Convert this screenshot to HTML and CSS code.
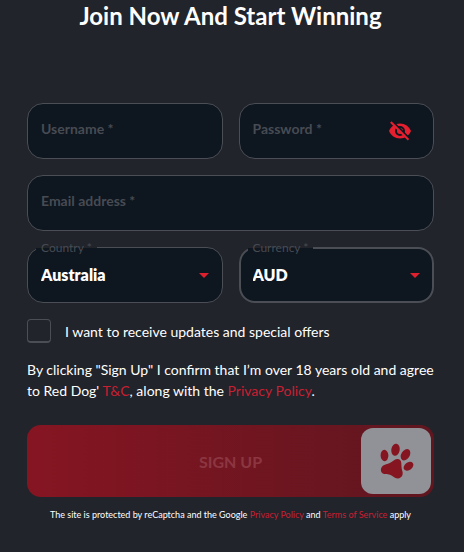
FILE: index.html
```html
<!DOCTYPE html>
<html lang="en">
<head>
  <meta charset="UTF-8" />
  <meta name="viewport" content="width=device-width, initial-scale=1.0"/>
  <title>Sign Up</title>
  <link rel="stylesheet" href="styles.css">
</head>
<body>
  <main class="signup">
    <h1>Join Now And Start Winning</h1>

    <form class="signup-form">
      <div class="field">
        <input type="text" id="username" placeholder=" " required />
        <label for="username">Username *</label>
      </div>

      <div class="field">
        <input type="password" id="password" placeholder=" " required />
        <label for="password">Password *</label>
        <button type="button" class="toggle-password" aria-label="Show password">
          <svg viewBox="0 0 24 24" width="24" height="24">
            <path fill="#e51f30" fill-rule="evenodd" d="M12 4.5C7 4.500 2.700 7.600 1 12c1.700 4.400 6 7.500 11 7.500s9.300-3.100 11-7.500c-1.700-4.400-6-7.500-11-7.500zM12 17a5 5 0 1 1 0-10 5 5 0 0 1 0 10z"/>
            <circle cx="12" cy="12" r="3" fill="#e51f30"/>
            <path d="M4.500 2.500L22 20" stroke="#0e161f" stroke-width="2"/>
            <path d="M2.800 3L20.500 20.700" stroke="#e51f30" stroke-width="2"/>
          </svg>
        </button>
      </div>

      <div class="field wide">
        <input type="email" id="email" placeholder=" " required />
        <label for="email">Email address *</label>
      </div>

      <div class="field select-field">
        <select id="country">
          <option>Australia</option>
          <option>New Zealand</option>
          <option>Canada</option>
        </select>
        <label for="country">Country *</label>
        <span class="arrow"></span>
      </div>

      <div class="field select-field strong">
        <select id="currency">
          <option>AUD</option>
          <option>NZD</option>
          <option>CAD</option>
        </select>
        <label for="currency">Currency *</label>
        <span class="arrow"></span>
      </div>

      <div class="updates wide">
        <input type="checkbox" id="updates" />
        <label for="updates">I want to receive updates and special offers</label>
      </div>

      <p class="terms wide">By clicking "Sign Up" I confirm that I’m over 18 years old and agree to Red Dog' <a href="#">T&amp;C</a>, along with the <a href="#">Privacy Policy</a>.</p>

      <button type="submit" class="submit wide" disabled>
        <span class="submit-text">SIGN UP</span>
        <span class="paw">
          <svg viewBox="0 0 36 38" width="36" height="38">
            <g fill="#861522">
              <ellipse cx="6.500" cy="13.500" rx="3.900" ry="5.700" transform="rotate(-2 6.500 13.500)"/>
              <ellipse cx="17.500" cy="7.800" rx="4.200" ry="6.100" transform="rotate(10 17.500 7.800)"/>
              <ellipse cx="27.500" cy="12.700" rx="4.200" ry="6.200" transform="rotate(32 27.500 12.700)"/>
              <ellipse cx="30.500" cy="24.300" rx="3.800" ry="5.400" transform="rotate(52 30.500 24.300)"/>
              <path d="M20 17c2.300.2 3.200 2 3.300 4.500.2 3 .2 5.200 1 7.500 1.200 3.500-.3 7-4.300 7.500-3.200.3-5-2.600-8-3.700-2.700-1-6.500.2-8.300-2.300-1.800-2.800-.4-6.300 2.600-7.500 2.500-1 5-1.400 7.200-2.900 2.300-1.600 3.700-3.300 6.500-3.100z"/>
            </g>
          </svg>
        </span>
      </button>
    </form>

    <p class="captcha">The site is protected by reCaptcha and the Google <a href="#">Privacy Policy</a> and <a href="#">Terms of Service</a> apply</p>
  </main>
</body>
</html>
```

FILE: styles.css
```css
* {
  margin: 0;
  padding: 0;
  box-sizing: border-box;
}
body {
  font-family: Lato, "Liberation Sans", sans-serif;
  background: #22242b;
  color: #fff;
  min-height: 100vh;
}
.signup {
  padding: 0 30px 24px 27px;
}
h1 {
  font-size: 24px;
  line-height: 32px;
  font-weight: 700;
  text-align: center;
  margin-bottom: 71px;
}
.signup-form {
  display: grid;
  grid-template-columns: 1fr 1fr;
  gap: 16px;
}
.wide {
  grid-column: 1 / -1;
}

/* fields */
.field {
  position: relative;
}
.field input,
.field select {
  display: block;
  width: 100%;
  height: 56px;
  padding: 0 13px 2px;
  font-family: inherit;
  font-size: 16px;
  font-weight: 800;
  color: #fff;
  background: #0e161f;
  border: 1px solid #4b4e55;
  border-radius: 16px;
  outline: none;
  appearance: none;
}
.field label {
  position: absolute;
  left: 14px;
  top: 16px;
  font-size: 14px;
  line-height: 20px;
  font-weight: 700;
  color: #474b53;
  pointer-events: none;
}
.field input:focus + label,
.field input:not(:placeholder-shown) + label,
.select-field label {
  left: 9px;
  top: -7px;
  padding: 0 5px;
  font-size: 12px;
  line-height: 16px;
  font-weight: 400;
  background: linear-gradient(#22242b 50%, #0e161f 50%);
}
.field.strong select {
  border-width: 2px;
  padding: 0 12px 2px;
}
.arrow {
  position: absolute;
  right: 14px;
  top: 26px;
  border: 5px solid transparent;
  border-top-color: #e0202f;
  border-bottom: 0;
  pointer-events: none;
}
.toggle-password {
  position: absolute;
  right: 22px;
  top: 16px;
  width: 24px;
  height: 24px;
  border: none;
  background: none;
  cursor: pointer;
}
.toggle-password svg {
  display: block;
}

/* checkbox */
.updates {
  display: flex;
  align-items: center;
  gap: 14px;
  font-size: 14px;
}
.updates input {
  width: 24px;
  height: 24px;
  border: 1px solid #4b4e55;
  border-bottom-width: 2px;
  border-radius: 4px;
  appearance: none;
}
.updates input:checked {
  background: #e0202f;
}
.terms {
  font-size: 14px;
  line-height: 21px;
}
a {
  color: #c91f32;
  text-decoration: none;
}

/* submit */
.submit {
  display: grid;
  grid-template-columns: 70px 1fr 70px;
  align-items: center;
  height: 72px;
  margin-top: 8px;
  padding: 0 3px;
  font-family: inherit;
  font-size: 16px;
  font-weight: 700;
  color: #8c3642;
  background: linear-gradient(90deg, #861522, #5f161f);
  border: none;
  border-radius: 14px;
}
.submit-text {
  grid-column: 2;
}
.paw {
  display: flex;
  align-items: center;
  justify-content: center;
  height: 66px;
  background: #909297;
  border-radius: 12px;
}
.captcha {
  margin-top: 10px;
  font-size: 9px;
  line-height: 16px;
  text-align: center;
}
```
